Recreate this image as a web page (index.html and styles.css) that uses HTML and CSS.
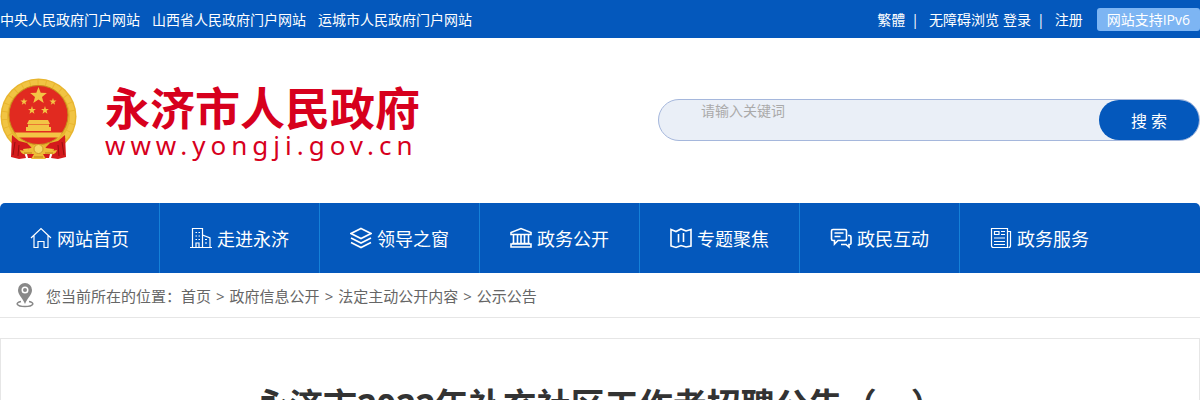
FILE: index.html
```
<!DOCTYPE html>
<html lang="zh-CN">
<head>
    <meta charset="UTF-8">
    <meta name="viewport" content="width=device-width, initial-scale=1">
    <title>永济市2022年补充社区工作者招聘公告（一）</title>
    <link rel="stylesheet" href="styles.css">
</head>
<body>

<div class="top">
    <div class="top_left">
        <a href="#">中央人民政府门户网站</a>
        <a href="#">山西省人民政府门户网站</a>
        <a href="#">运城市人民政府门户网站</a>
    </div>
    <div class="top_right">
        <a href="#">繁體</a>
        <span class="line">|</span>
        <a href="#">无障碍浏览</a>
        <a class="login" href="#">登录</a>
        <span class="line">|</span>
        <a href="#">注册</a>
        <span class="ipv6">网站支持IPv6</span>
    </div>
</div>

<div class="header">
    <a class="logo" href="#">
        <svg class="emblem" viewBox="0 0 78 84">
            <circle cx="38.500" cy="38.500" r="38" fill="#e8b52f"/>
            <circle cx="38.500" cy="38.500" r="34" fill="none" stroke="#f1c443" stroke-width="5" stroke-dasharray="7 1"/>
            <circle cx="38.500" cy="37" r="29.500" fill="#e12a20" stroke="#c58a1c"/>
            <g fill="#f3c545">
                <path d="M38.500 9l2.200 5.800 6.200.3-4.900 3.800 1.700 6-5.200-3.500-5.200 3.500 1.700-6-4.900-3.800 6.200-.3z"/>
                <path d="M24 20l.8 2.500 2.700.1-2.100 1.600.7 2.600-2.100-1.500-2.200 1.500.8-2.600-2.200-1.600 2.700-.1zM53 20l.8 2.500 2.700.1-2.100 1.600.7 2.600-2.100-1.500-2.200 1.500.8-2.600-2.200-1.600 2.700-.1zM32 28l.9 2.900 3 .1-2.300 1.800.8 2.900-2.400-1.700-2.500 1.700.9-2.900-2.400-1.800 3-.1zM45 28l.9 2.900 3 .1-2.300 1.800.8 2.900-2.400-1.700-2.500 1.700.9-2.900-2.400-1.800 3-.1z"/>
                <path d="M29 42h19l2 4H27zM28 46.500h21v2.500h2v4H26v-4h2zM15 54.500h47l-3 5H18z"/>
            </g>
            <path fill="#d41a1c" d="M12 57l7 6 8 2 5 5-9 1 3 9-7 1-8-2zM65 57l-7 6-8 2-5 5 9 1-3 9 7 1 8-2zM27 76q11-5 23 0l-1 4H28z"/>
            <path fill="none" stroke="#98100f" d="M15 64l-2 13M19 67l-1 11M62 64l2 13M58 67l1 11"/>
            <path fill="#eebc38" d="M20 72q9 2 12-3 6-6 13 0 3 5 12 3-1 5-7 4l-7 0 3 5H31l3-5-7 0q-6 1-7-4z"/>
            <circle cx="38.500" cy="71" r="4.500" fill="#f7d866" stroke="#d09a28"/>
            <path fill="none" stroke="#bd7e19" d="M24 75l8 0M53 75l-8 0M34 79h9"/>
        </svg>
        <span class="logo_text">
            <strong>永济市人民政府</strong>
            <span class="logo_url">www.yongji.gov.cn</span>
        </span>
    </a>
    <form class="search">
        <input class="search_text" type="text" aria-label="请输入关键词" placeholder="请输入关键词">
        <button class="search_btn" type="button">搜 索</button>
    </form>
</div>

<nav class="nav">
    <a href="#">
        <svg viewBox="0 0 22 22"><path d="M1 11L11 1.500 21 11M4 8.500v12h4v-6h6v6h4v-12"/></svg>
        网站首页
    </a>
    <a href="#">
        <svg viewBox="0 0 22 22"><path d="M0 20.500h22M2.500 20V1.500h10V20M12.500 8l7.500 3v9.500M5.500 5.500h1.500M8.500 5.500H10M5.500 9h1.500M8.500 9H10M5.500 12.500h1.500M8.500 12.500H10M6 20v-4h3v4M15 12.500h2M15 16h2"/></svg>
        走进永济
    </a>
    <a href="#">
        <svg class="bold" viewBox="0 0 22 22"><path d="M11 1.500l10 5-10 5-10-5zM1 11l10 5 10-5M1 15.500l10 5 10-5"/></svg>
        领导之窗
    </a>
    <a href="#">
        <svg class="bold" viewBox="0 0 22 22"><path d="M1 7.500V5.500L11 1.500l10 4v2zM3.500 8v8M7.500 8v8M11 8v8M14.500 8v8M18.500 8v8M2 16.500h18M1 20h20v-3H1z"/></svg>
        政务公开
    </a>
    <a href="#">
        <svg class="bold" viewBox="0 0 22 22"><path d="M1 2.500l5 2 5-2.500 5 2 5-1.500v16.500l-5 1-5-1.500-5 2-5-1.500zM8.500 7v8.500M13.500 6v9"/></svg>
        专题聚焦
    </a>
    <a href="#">
        <svg class="bold" viewBox="0 0 22 22"><path d="M3 2.500h12q1.500 0 1.500 1.500v8q0 1.500-1.500 1.500H8L4.500 17v-3.500H3Q1.500 13.500 1.500 12V4Q1.500 2.500 3 2.500zM4.500 6h9M4.500 9.500h6M18 8.500h1.500q1.500 0 1.500 1.500v6.500q0 1-2 1V20l-3-2.500h-5"/></svg>
        政民互动
    </a>
    <a href="#">
        <svg viewBox="0 0 22 22"><path d="M1.500 1.500h16v19h-14q-2 0-2-2zM17.500 4.500h3v14q0 2-2 2M4.500 4.500H9v3H4.500zM11 4.500h4M11 7.500h4M4 11h11M4 14.500h11M4 17.500h11"/></svg>
        政务服务
    </a>
</nav>

<div class="position">
    <svg class="pin" viewBox="0 0 18 26">
        <path fill="none" stroke="#888" stroke-width="1.500" d="M5 19.500c-6 1-5 5 4 5s10-4 4-5"/>
        <path fill="#888" fill-rule="evenodd" d="M9 1a7 7 0 0 0-7 7c0 5 4 7 7 14 3-7 7-9 7-14a7 7 0 0 0-7-7zm0 3.500a3.500 3.500 0 1 1 0 7 3.500 3.500 0 0 1 0-7z"/>
        <circle cx="9" cy="8" r="2" fill="#888"/>
    </svg>
    <div class="crumbs">您当前所在的位置：<a href="#">首页</a><span>&gt;</span><a href="#">政府信息公开</a><span>&gt;</span><a href="#">法定主动公开内容</a><span>&gt;</span><a href="#">公示公告</a></div>
</div>

<div class="article">
    <h1>永济市2022年补充社区工作者招聘公告（一）</h1>
</div>

</body>
</html>
```
FILE: styles.css
```
* {
    box-sizing: border-box;
    margin: 0;
    padding: 0;
}

body {
    font-family: "Open Sans", "Noto Sans CJK SC", sans-serif;
    font-size: 14px;
    color: #333;
    background-color: #fff;
}

a {
    color: inherit;
    text-decoration: none;
}

.top {
    display: flex;
    justify-content: space-between;
    align-items: center;
    height: 38px;
    color: #fff;
    background-color: #0458bc;
}

.top_left {
    display: flex;
    gap: 12px;
}

.top_right {
    display: flex;
    align-items: center;
}

.line {
    margin: 0 10px 0 6px;
}

.login {
    margin-left: 4px;
}

.ipv6 {
    height: 23px;
    margin-left: 14px;
    padding: 0 10px;
    line-height: 23px;
    border-radius: 3px;
    background-color: #7db5f3;
}

.header {
    display: flex;
    justify-content: space-between;
    height: 165px;
    padding-top: 40px;
}

.logo {
    display: flex;
    gap: 27px;
    color: #d7001d;
}

.emblem {
    width: 78px;
    height: 84px;
}

.logo_text strong {
    display: block;
    margin-top: 4px;
    font-size: 45px;
    line-height: 54px;
}

.logo_url {
    display: block;
    font-family: "Noto Sans", sans-serif;
    font-size: 26px;
    line-height: 18px;
    letter-spacing: 5px;
}

.search {
    display: flex;
    width: 542px;
    height: 42px;
    margin-top: 21px;
    border: 1px solid #a5b7dc;
    border-radius: 21px;
    background-color: #eaeff7;
}

.search_text {
    flex: 1;
    min-width: 0;
    height: 20px;
    padding-left: 42px;
    font: inherit;
    border: 0;
    outline: 0;
    background: none;
}

.search_text::placeholder {
    color: #aaa;
}

.search_btn {
    width: 100px;
    font-family: inherit;
    font-size: 16px;
    color: #fff;
    border: 0;
    border-radius: 20px;
    background-color: #0458bc;
}

.nav {
    display: flex;
    height: 70px;
    border-radius: 5px 5px 0 0;
    background-color: #0458bc;
}

.nav a {
    display: flex;
    align-items: center;
    gap: 5px;
    width: 160px;
    padding-left: 30px;
    font-size: 18px;
    color: #fff;
    border-right: 1px solid #1581d8;
}

.nav a:last-child {
    border-right: 0;
}

.nav svg {
    width: 22px;
    height: 22px;
    fill: none;
    stroke: #fff;
    stroke-width: 1.2;
}

.nav .bold {
    stroke-width: 1.6;
}

.position {
    display: flex;
    align-items: center;
    gap: 12px;
    height: 45px;
    padding-left: 16px;
    font-size: 15px;
    color: #666;
    border-bottom: 1px solid #e6e6e6;
}

.pin {
    width: 18px;
    height: 26px;
}

.crumbs span {
    margin: 0 5px;
}

.article {
    margin-top: 20px;
    padding: 36px 20px;
    border: 1px solid #e6e6e6;
}

.article h1 {
    font-size: 34px;
    line-height: 60px;
    text-align: center;
}
```
